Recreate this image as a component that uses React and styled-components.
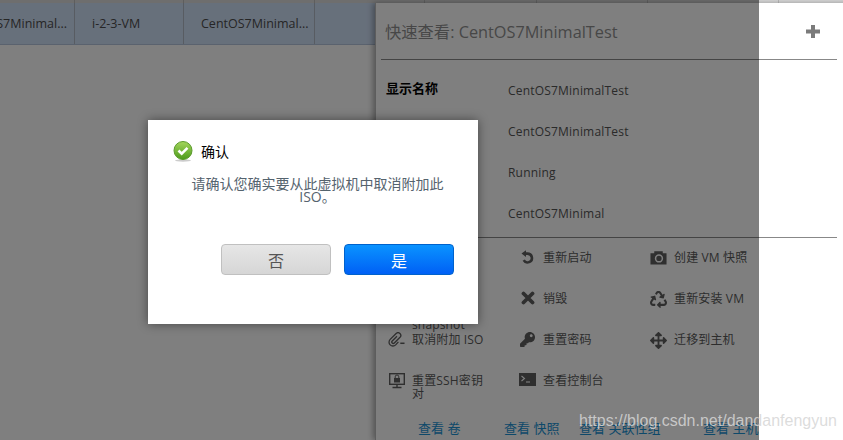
import React from 'react';
import styled, { createGlobalStyle } from 'styled-components';
import { FaKey, FaArrowsAlt, FaRecycle, FaStop } from 'react-icons/fa';

const GlobalStyle = createGlobalStyle`
  html, body {
    margin: 0;
    padding: 0;
    height: 100%;
    overflow: hidden;
    background: #fff;
    font-family: "Open Sans", "Noto Sans CJK SC", sans-serif;
  }
`;

const Page = styled.div`
  position: relative;
  width: 843px;
  height: 440px;
  overflow: hidden;
  background: #fff;
`;

const HeaderStrip = styled.div`
  display: grid;
  grid-template-columns: 75px 109px 131px 110px 112px 111px 131px 1fr;
  height: 3px;
  background: #dcdcdc;
`;

const HeaderCell = styled.div`
  border-right: 1px solid #bdbdbd;
`;

const Row = styled.div`
  display: grid;
  grid-template-columns: 75px 109px 131px 1fr;
  height: 41px;
  background: #cfe0f7;
  border-bottom: 1px solid #b4c4dc;
`;

const Cell = styled.div`
  display: flex;
  align-items: center;
  justify-content: ${(p) => (p.$clipped ? 'flex-end' : 'flex-start')};
  padding: ${(p) => (p.$clipped ? '0 7px 0 0' : `0 0 0 ${p.$indent || 0}px`)};
  overflow: hidden;
  white-space: nowrap;
  font-size: 12.5px;
  color: #4c4c4c;
  border-right: 1px solid #b0b8c4;
`;

const QuickView = styled.aside`
  position: absolute;
  left: 375px;
  top: 3px;
  right: -20px;
  bottom: 0;
  background: #fff;
  border-left: 1px solid #bbb;
  box-shadow: -2px 0 6px rgba(0, 0, 0, 0.35);
`;

const Title = styled.div`
  display: flex;
  align-items: center;
  justify-content: space-between;
  height: 56px;
  margin: 0 26px 0 5px;
  padding: 0 0 0 4px;
  border-bottom: 1px solid #888;
  font-size: 16.3px;
  color: #8f8f8f;
`;

const Expand = styled.svg`
  margin: 0 17px 0 0;
  color: #7b7b7b;
`;

const Details = styled.div`
  height: 178px;
  margin: 0 26px 0 5px;
  padding: 10px 0 0 5px;
  box-sizing: border-box;
  border-bottom: 1px solid #888;
`;

const DetailRow = styled.div`
  display: grid;
  grid-template-columns: 122px 1fr;
  height: 41px;
  font-size: 12px;
  letter-spacing: 0.2px;
  color: #555;
  line-height: 41px;
`;

const DetailLabel = styled.span`
  font-size: 13px;
  font-weight: 700;
  line-height: 36px;
  letter-spacing: 0;
  color: #000;
`;

const Actions = styled.div`
  display: grid;
  grid-template-columns: 131px 131px 130px;
  grid-auto-rows: 41px;
  padding: 13px 0 0 12px;
`;

const Action = styled.div`
  display: grid;
  grid-template-columns: 24px 74px;
  align-items: start;
  font-size: 12px;
  line-height: 13px;
  letter-spacing: 0.15px;
  color: #5a5a5a;
`;

const ActionIcon = styled.span`
  display: flex;
  justify-content: center;
  width: 17px;
  margin-top: -1px;
  font-size: 16px;
  color: #5e5e5e;
`;

const ActionLabel = styled.span`
  white-space: ${(p) => (p.$wrap ? 'normal' : 'nowrap')};
`;

const Links = styled.div`
  display: grid;
  grid-template-columns: 86px 75px 124px 1fr;
  padding: 0 0 0 42px;
  margin-top: 3px;
  font-size: 13px;
  color: #1c93d4;
  white-space: nowrap;
`;

const Overlay = styled.div`
  position: absolute;
  left: 0;
  top: 0;
  bottom: 0;
  width: 759px;
  background: rgba(0, 0, 0, 0.5);
`;

const Dialog = styled.div`
  position: absolute;
  left: 148px;
  top: 120px;
  width: 330px;
  height: 204px;
  box-sizing: border-box;
  padding: 21px 24px 0 25px;
  background: #fff;
  box-shadow: 0 0 10px rgba(0, 0, 0, 0.45);
`;

const DialogHead = styled.div`
  display: flex;
  align-items: center;
  gap: 8px;
  font-size: 14px;
  line-height: 20px;
  color: #000;
`;

const DialogText = styled.p`
  margin: 15px 0 0 8px;
  padding: 0;
  font-size: 14px;
  line-height: 13px;
  text-align: center;
  color: #55636e;
`;

const DialogButtons = styled.div`
  display: flex;
  justify-content: flex-end;
  gap: 13px;
  margin-top: 41px;
`;

const Button = styled.button`
  width: 110px;
  height: 31px;
  padding: 3px 0 0;
  border-radius: 4px;
  font-family: inherit;
  font-size: 16px;
  line-height: 1;
  border: 1px solid ${(p) => (p.$primary ? '#0062cc' : '#c0c0c0')};
  color: ${(p) => (p.$primary ? '#fff' : '#555')};
  background: ${(p) =>
    p.$primary
      ? 'linear-gradient(#0a93ff, #0060f5)'
      : 'linear-gradient(#e6e6e6, #d6d6d6)'};
`;

const Watermark = styled.div`
  position: absolute;
  left: 579px;
  top: 412px;
  font-family: "Liberation Sans", Arial, sans-serif;
  font-size: 16px;
  color: rgba(214, 214, 214, 0.85);
  white-space: nowrap;
`;

const CheckIcon = () => (
  <svg width="20" height="21" viewBox="0 0 20 21">
    <defs>
      <linearGradient id="ok" x1="0" y1="0" x2="0" y2="1">
        <stop offset="0" stopColor="#a4d65c" />
        <stop offset="1" stopColor="#4c9a1c" />
      </linearGradient>
    </defs>
    <ellipse cx="10" cy="19.5" rx="8" ry="1.2" fill="#ccc" />
    <circle cx="10" cy="9.5" r="9" fill="url(#ok)" stroke="#5a9a2a" />
    <path d="M5.5 9.5l3.2 3.2 5.8-5.8" fill="none" stroke="#fff" strokeWidth="2.6" />
  </svg>
);

const PlusIcon = () => (
  <Expand width="14" height="13" viewBox="0 0 14 13">
    <path d="M5 0h4v4.5h5v4H9V13H5V8.5H0v-4h5z" fill="currentColor" />
  </Expand>
);

const RestartIcon = () => (
  <svg width="15" height="15" viewBox="0 0 15 15">
    <path d="M5 3.6h2.5a4.4 4.4 0 1 1-3.8 6.6" fill="none" stroke="currentColor" strokeWidth="2.6" />
    <path d="M1.5 3.6L6 0.2v6.8z" fill="currentColor" />
  </svg>
);

const CameraIcon = () => (
  <svg width="18" height="15" viewBox="0 0 18 15">
    <path d="M0.5 3h4V1h9v2h4v12h-17z" fill="currentColor" />
    <circle cx="9.5" cy="8.5" r="3.6" fill="none" stroke="#fff" strokeWidth="1.6" />
  </svg>
);

const CrossIcon = () => (
  <svg width="14" height="14" viewBox="0 0 14 14">
    <path d="M2.5 2.5l9 9M11.5 2.5l-9 9" stroke="currentColor" strokeWidth="3.8" strokeLinecap="round" />
  </svg>
);

const DetachIcon = () => (
  <svg width="18" height="15" viewBox="0 0 18 15">
    <path
      d="M9.5 4L4.5 9a1.5 1.5 0 0 0 2.2 2.2l6-6a2.9 2.9 0 0 0-4.1-4.1l-6.3 6.3a4.1 4.1 0 0 0 5.8 5.8L11 10"
      fill="none"
      stroke="currentColor"
      strokeWidth="1.4"
    />
    <path d="M13 11.5h4.5" stroke="currentColor" strokeWidth="1.6" />
  </svg>
);

const KeyScreenIcon = () => (
  <svg width="16" height="16" viewBox="0 0 16 16">
    <rect x="0.7" y="0.7" width="14.6" height="10.6" fill="none" stroke="currentColor" strokeWidth="1.4" />
    <rect x="5" y="5" width="6" height="4.5" fill="currentColor" />
    <path d="M6.2 5V3.8a1.8 1.8 0 0 1 3.6 0V5" fill="none" stroke="currentColor" />
    <path d="M8 12v2M3.5 14.5h9" stroke="currentColor" strokeWidth="1.4" />
  </svg>
);

const ConsoleIcon = () => (
  <svg width="17" height="13" viewBox="0 0 17 13">
    <rect width="17" height="13" fill="currentColor" />
    <path d="M2.5 3l3 2.5-3 2.5" fill="none" stroke="#fff" strokeWidth="1.1" />
    <path d="M7 9h4" stroke="#fff" strokeWidth="1.1" />
  </svg>
);

const details = [
  ['显示名称', 'CentOS7MinimalTest'],
  ['名称', 'CentOS7MinimalTest'],
  ['状态', 'Running'],
  ['模板', 'CentOS7Minimal'],
];

const actions = [
  { icon: <FaStop />, label: '停止 VM' },
  { icon: <RestartIcon />, label: '重新启动' },
  { icon: <CameraIcon />, label: '创建 VM 快照' },
  { icon: null, label: 'Take VM volume snapshot', wrap: true },
  { icon: <CrossIcon />, label: '销毁' },
  { icon: <FaRecycle size={17} />, label: '重新安装 VM' },
  { icon: <DetachIcon />, label: '取消附加 ISO' },
  { icon: <FaKey size={15} />, label: '重置密码' },
  { icon: <FaArrowsAlt size={17} />, label: '迁移到主机' },
  { icon: <KeyScreenIcon />, label: '重置SSH密钥对', wrap: true },
  { icon: <ConsoleIcon />, label: '查看控制台' },
];

const App = () => (
  <Page>
    <GlobalStyle />
    <HeaderStrip>
      {Array.from({ length: 7 }, (_, i) => (
        <HeaderCell key={i} />
      ))}
      <div />
    </HeaderStrip>
    <Row>
      <Cell $clipped>CentOS7Minimal...</Cell>
      <Cell $indent={17}>i-2-3-VM</Cell>
      <Cell $indent={17}>CentOS7Minimal...</Cell>
      <Cell />
    </Row>

    <QuickView>
      <Title>
        <span>快速查看: CentOS7MinimalTest</span>
        <PlusIcon />
      </Title>
      <Details>
        {details.map(([label, value]) => (
          <DetailRow key={label}>
            <DetailLabel>{label}</DetailLabel>
            <span>{value}</span>
          </DetailRow>
        ))}
      </Details>
      <Actions>
        {actions.map((action) => (
          <Action key={action.label}>
            <ActionIcon>{action.icon}</ActionIcon>
            <ActionLabel $wrap={action.wrap}>{action.label}</ActionLabel>
          </Action>
        ))}
      </Actions>
      <Links>
        <span>查看 卷</span>
        <span>查看 快照</span>
        <span>查看 关联性组</span>
        <span>查看 主机</span>
      </Links>
    </QuickView>

    <Overlay />

    <Dialog>
      <DialogHead>
        <CheckIcon />
        <span>确认</span>
      </DialogHead>
      <DialogText>
        请确认您确实要从此虚拟机中取消附加此
        <br />
        ISO。
      </DialogText>
      <DialogButtons>
        <Button>否</Button>
        <Button $primary>是</Button>
      </DialogButtons>
    </Dialog>

    <Watermark>https://blog.csdn.net/dandanfengyun</Watermark>
  </Page>
);

export default App;
